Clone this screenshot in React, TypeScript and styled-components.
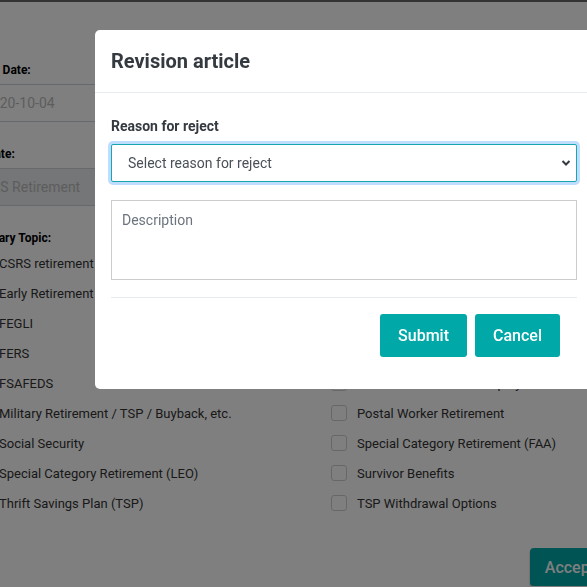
import * as React from 'react';
import styled, { createGlobalStyle } from 'styled-components';

const GlobalStyle = createGlobalStyle`
  html, body {
    margin: 0;
    padding: 0;
    background: #fff;
    overflow: hidden;
  }
  body {
    font-family: Roboto, "Liberation Sans", Arial, sans-serif;
    color: #333;
  }
  * {
    box-sizing: border-box;
  }
`;

const TopBar = styled.div`
  height: 2px;
  background: #666;
`;

const Page = styled.div`
  margin-left: -27px;
  width: 637px;
  padding-top: 59px;
`;

const FieldGroup = styled.div`
  width: 330px;
  margin-bottom: 23px;
`;

const FieldLabel = styled.div`
  font-size: 12px;
  line-height: 18px;
  font-weight: 700;
  color: #000;
  margin-bottom: 5px;
`;

const FieldBox = styled.div<{ $disabled?: boolean }>`
  height: 38px;
  display: flex;
  align-items: center;
  padding: 0 ${({ $disabled }) => ($disabled ? '2px' : '10px')};
  border: 1px solid #ced4da;
  background: ${({ $disabled }) => ($disabled ? '#e9ecef' : '#fff')};
  color: #bbb;
  font-size: 14px;
`;

const TopicLabel = styled(FieldLabel)`
  margin-bottom: 1px;
`;

const TopicGrid = styled.div`
  display: grid;
  grid-template-columns: 358px 1fr;
`;

const TopicColumn = styled.div`
  display: flex;
  flex-direction: column;
`;

const TopicRow = styled.label`
  height: 30px;
  display: flex;
  align-items: center;
  gap: 10px;
  font-size: 13px;
  color: #333;
  white-space: nowrap;
`;

const CheckBox = styled.span`
  width: 16px;
  height: 16px;
  border: 1px solid #cfcfcf;
  border-radius: 3px;
  background: #fff;
  flex: none;
`;

const PageFooter = styled.div`
  display: flex;
  justify-content: flex-end;
  margin-top: 30px;
`;

const AcceptButton = styled.button`
  height: 38px;
  padding: 0 15px;
  border: none;
  border-radius: 4px;
  background: #00a8a8;
  color: #fff;
  font-family: inherit;
  font-size: 16px;
  font-weight: 500;
  box-shadow: 0 2px 2px rgba(0, 0, 0, 0.35);
`;

const Backdrop = styled.div`
  position: fixed;
  inset: 0;
  background: rgba(0, 0, 0, 0.5);
`;

const Modal = styled.div`
  position: fixed;
  top: 30px;
  left: 95px;
  width: 498px;
  background: #fff;
  border-radius: 5px;
`;

const ModalHeader = styled.div`
  padding: 16px 16px 16px;
  border-bottom: 1px solid #e9ecef;
`;

const ModalTitle = styled.h5`
  margin: 0;
  font-size: 20px;
  line-height: 30px;
  font-weight: 700;
  color: #343a40;
`;

const ModalBody = styled.div`
  padding: 23px 16px 0;
`;

const BodyLabel = styled.div`
  font-size: 14px;
  line-height: 21px;
  font-weight: 700;
  color: #343a40;
  margin-bottom: 7px;
`;

const SelectWrap = styled.div`
  position: relative;
`;

const Select = styled.select`
  display: block;
  width: 100%;
  height: 38px;
  padding: 0 30px 0 16px;
  appearance: none;
  border: 1px solid #1aa6b0;
  border-radius: 2px;
  background: #fff;
  box-shadow: 0 0 0 3px rgba(0, 123, 255, 0.25);
  color: #495057;
  font-family: inherit;
  font-size: 14px;
  outline: none;
`;

const Chevron = styled.svg`
  position: absolute;
  right: 6px;
  top: 15px;
  pointer-events: none;
`;

const TextArea = styled.textarea`
  display: block;
  width: 100%;
  height: 80px;
  margin-top: 18px;
  padding: 9px 10px;
  border: 1px solid #ccc;
  border-radius: 0;
  resize: none;
  font-family: inherit;
  font-size: 14px;
  line-height: 21px;
  color: #495057;

  &::placeholder {
    color: #6c757d;
  }
`;

const Divider = styled.hr`
  margin: 17px 0 0;
  border: none;
  border-top: 1px solid #e9ecef;
`;

const ModalFooter = styled.div`
  display: flex;
  justify-content: flex-end;
  gap: 8px;
  padding: 16px 33px 32px 16px;
`;

const ModalButton = styled.button`
  height: 43px;
  padding: 0 18px;
  border: none;
  border-radius: 3px;
  background: #00a8a8;
  color: #fff;
  font-family: inherit;
  font-size: 16px;
  font-weight: 500;
`;

const leftTopics = [
  'CSRS retirement',
  'Early Retirement (VERA / DSR)',
  'FEGLI',
  'FERS',
  'FSAFEDS',
  'Military Retirement / TSP / Buyback, etc.',
  'Social Security',
  'Special Category Retirement (LEO)',
  'Thrift Savings Plan (TSP)',
];

const rightTopics = [
  'Estate Planning',
  'FEHB',
  'Federal Disability Retirement',
  'Long Term Care',
  'Phased Retirement / Employment',
  'Postal Worker Retirement',
  'Special Category Retirement (FAA)',
  'Survivor Benefits',
  'TSP Withdrawal Options',
];

const TopicList = ({ items }: { items: string[] }) => (
  <TopicColumn>
    {items.map((item) => (
      <TopicRow key={item}>
        <CheckBox />
        {item}
      </TopicRow>
    ))}
  </TopicColumn>
);

const App = () => (
  <>
    <GlobalStyle />
    <TopBar />
    <Page>
      <FieldGroup>
        <FieldLabel>Start Date:</FieldLabel>
        <FieldBox>2020-10-04</FieldBox>
      </FieldGroup>
      <FieldGroup>
        <FieldLabel>Update:</FieldLabel>
        <FieldBox $disabled>FERS Retirement</FieldBox>
      </FieldGroup>
      <TopicLabel>Primary Topic:</TopicLabel>
      <TopicGrid>
        <TopicList items={leftTopics} />
        <TopicList items={rightTopics} />
      </TopicGrid>
      <PageFooter>
        <AcceptButton type="button">Accept</AcceptButton>
      </PageFooter>
    </Page>

    <Backdrop />
    <Modal>
      <ModalHeader>
        <ModalTitle>Revision article</ModalTitle>
      </ModalHeader>
      <ModalBody>
        <BodyLabel>Reason for reject</BodyLabel>
        <SelectWrap>
          <Select defaultValue="">
            <option value="">Select reason for reject</option>
          </Select>
          <Chevron width="10" height="8" viewBox="0 0 10 8">
            <path d="M1.5 2l3.5 3.5L8.5 2" fill="none" stroke="#343a40" strokeWidth="2" />
          </Chevron>
        </SelectWrap>
        <TextArea placeholder="Description" />
        <Divider />
      </ModalBody>
      <ModalFooter>
        <ModalButton type="button">Submit</ModalButton>
        <ModalButton type="button">Cancel</ModalButton>
      </ModalFooter>
    </Modal>
  </>
);

export default App;
